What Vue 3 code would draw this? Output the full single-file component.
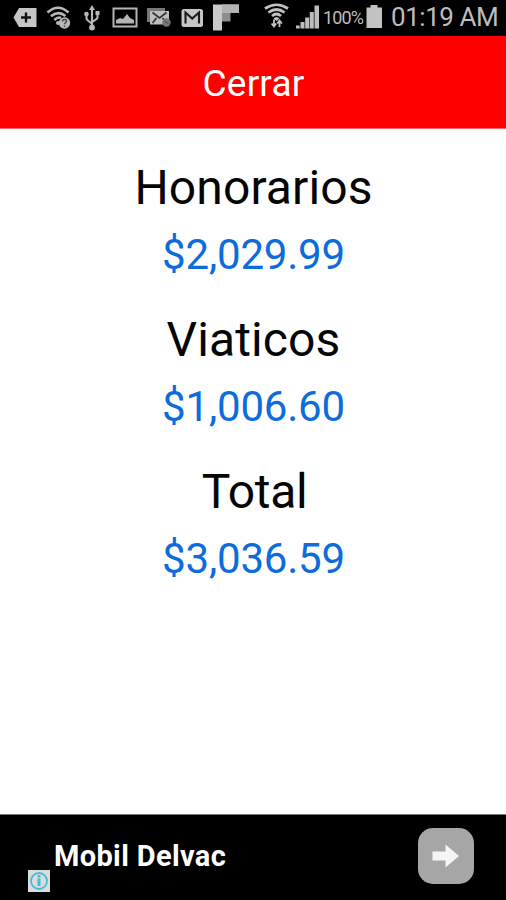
<script setup>
const items = [
    { name: 'Honorarios', key: 'honorarios', amount: '$2,029.99' },
    { name: 'Viaticos', key: 'viaticos', amount: '$1,006.60' },
    { name: 'Total', key: 'total', amount: '$3,036.59' },
]
</script>

<template>
    <div class="screen">
        <div class="status">
            <div class="notifications">
                <svg width="24" height="36" viewBox="0 0 24 36">
                    <path d="M6 8H23.500V27H6L.5 17.500Z" fill="#c6c6c6" />
                    <path d="M13 12.500v10M8 17.500h10" stroke="#111" stroke-width="2.400" />
                </svg>
                <svg class="wifi-off" width="26" height="36" viewBox="0 0 26 36">
                    <g fill="none" stroke="#b8b8b8" stroke-width="2.600">
                        <path d="M1.500 12.500Q12 3 22.500 12.500" />
                        <path d="M5 16.300Q12 10 19.500 16" />
                        <path d="M8.300 20Q12 16.500 15 18" />
                    </g>
                    <circle cx="12" cy="23" r="2" fill="#b8b8b8" />
                    <circle cx="18.500" cy="23" r="5.700" fill="#b8b8b8" />
                    <path d="M16.500 21.500q0-2 2-2t2 1.800q0 1-2 2.200v.8M18.500 25.500v1.500" fill="none" stroke="#444" stroke-width="1.300" />
                </svg>
                <svg class="usb" width="16" height="36" viewBox="0 0 16 36">
                    <g fill="none" stroke="#b8b8b8" stroke-width="2.100">
                        <path d="M8 9V28M2.500 13V18.500Q2.500 20 8 23.500M13.500 12V17.500Q13.500 19 8 22" />
                    </g>
                    <path d="M8 5l3 5H5Z" fill="#b8b8b8" />
                    <circle cx="8" cy="27.500" r="2.900" fill="#b8b8b8" />
                    <circle cx="2.500" cy="14" r="2.300" fill="#b8b8b8" />
                    <path d="M11.500 11h4v4h-4z" fill="#b8b8b8" />
                </svg>
                <svg class="picture" width="26" height="36" viewBox="0 0 26 36">
                    <path d="M1.500 8.500H24.500V26.500H1.500Z" fill="none" stroke="#b5b5b5" stroke-width="2" />
                    <path d="M4 23.500V20l4-2 3 1 4-5 3 4 4 2v3.500Z" fill="#b5b5b5" />
                </svg>
                <svg class="mail" width="26" height="36" viewBox="0 0 26 36">
                    <path d="M1 8h18v3H4.500v11H1Z" fill="#777" />
                    <path d="M4 11h19v13.500H4Z" fill="#bdbdbd" />
                    <path d="M6.500 12.500l7 5.500L20.500 12.500M6.500 23l4-5M20.500 23l-4-5" fill="none" stroke="#333" stroke-width="1.700" />
                    <circle cx="20.500" cy="22.500" r="4.200" fill="#777" />
                    <path d="M18.500 21l4 3" stroke="#444" />
                </svg>
                <svg class="gmail" width="23" height="36" viewBox="0 0 23 36">
                    <rect x=".5" y="9" width="21.500" height="18" rx="2.500" fill="#c6c6c6" />
                    <path d="M4.500 23.500V12.500L11.200 18.500L18 12.500V23.500" fill="none" stroke="#1b1b1b" stroke-width="2.100" />
                </svg>
                <svg class="flip" width="27" height="36" viewBox="0 0 27 36">
                    <path d="M0 4.500H26V13H9V30.500H0Z" fill="#c9c9c9" />
                    <path d="M9 13H17.500V21.500H9Z" fill="#8d8d8d" />
                    <path d="M9 4.500H26V13H9Z" fill="#b3b3b3" />
                </svg>
            </div>
            <svg class="wifi" width="26" height="36" viewBox="0 0 26 36">
                <g fill="none" stroke="#c2c2c2" stroke-width="2.700">
                    <path d="M1 8.500Q12.500 1 24 8.500" />
                    <path d="M4.500 12.500Q12.500 6.500 20.500 12.500" />
                    <path d="M8 16Q12.500 12 17 16" />
                </g>
                <path d="M9.500 18.500Q12.500 15.500 15.500 18.500L12.500 21Z" fill="#c2c2c2" />
                <path d="M10 19.500v6.500M15.500 27v-6M7.600 23.500l2.400 3 2.200-3M13.200 23.500l2.300-3 2.300 3" fill="none" stroke="#c2c2c2" stroke-width="1.800" />
            </svg>
            <svg class="signal" width="24" height="36" viewBox="0 0 24 36">
                <path d="M0 25.500h3.700v3H0zM4.500 22h4v6.500h-4zM9.200 17.500h4v11h-4zM13.800 12h4v16.500h-4zM18.500 5.500H23v23H18.500z" fill="#bdbdbd" />
            </svg>
            <span class="percent">100%</span>
            <svg class="battery" width="17" height="36" viewBox="0 0 17 36">
                <path d="M4.500 5h7v2.500H16V28H.5V7.500h4Z" fill="#c2c2c2" />
            </svg>
            <span class="time">01:19 AM</span>
        </div>
        <div class="close">Cerrar</div>
        <div class="content">
            <div v-for="item in items" :key="item.key" class="item">
                <div class="name" :class="item.key">{{ item.name }}</div>
                <div class="amount">{{ item.amount }}</div>
            </div>
        </div>
        <div class="ad">
            <svg class="info" width="22" height="22" viewBox="0 0 22 22">
                <rect width="22" height="22" fill="#dcdcdc" />
                <circle cx="11" cy="11" r="8" fill="none" stroke="#3fbfd8" stroke-width="1.800" />
                <path d="M11 5v2.500M11 8.500v7.500" fill="none" stroke="#3fbfd8" stroke-width="3" />
            </svg>
            <span class="brand">Mobil Delvac</span>
            <div class="go">
                <svg width="28" height="26" viewBox="0 0 28 26">
                    <path d="M.5 8.500H13.500V1.500L27 13L13.500 24.500V17.500H.5Z" fill="#f5f5f5" />
                </svg>
            </div>
        </div>
    </div>
</template>

<style>
body {
    margin: 0;
    background: #fff;
}
</style>

<style scoped>
.screen {
    width: 506px;
    height: 900px;
    display: flex;
    flex-direction: column;
    background: #fefefe;
    font-family: Roboto, sans-serif;
    overflow: hidden;
}
.screen svg {
    display: block;
    flex: none;
}
.status {
    display: flex;
    height: 36px;
    background: #000;
    color: #bdbdbd;
    line-height: 36px;
    white-space: nowrap;
}
.notifications {
    display: flex;
    width: 264px;
    padding-left: 13px;
    box-sizing: border-box;
    flex: none;
}
.wifi-off {
    margin-left: 9px;
}
.usb {
    margin-left: 12px;
}
.picture {
    margin-left: 12px;
}
.mail {
    margin-left: 8px;
}
.gmail {
    margin-left: 9px;
}
.flip {
    margin-left: 9px;
}
.signal {
    margin-left: 6px;
}
.percent {
    width: 43px;
    padding-left: 3px;
    font-size: 18px;
    letter-spacing: -0.9px;
}
.time {
    margin-left: 8px;
    font-size: 26px;
    line-height: 35px;
    letter-spacing: -0.45px;
}
.close {
    height: 92px;
    border-bottom: 1px solid #ff6a6a;
    background: #fe0000;
    color: #fff;
    font-size: 37px;
    line-height: 96px;
    letter-spacing: 0.2px;
    text-indent: 1px;
    text-align: center;
}
.content {
    flex: 1;
    padding-top: 23px;
}
.item {
    height: 152px;
    text-align: center;
}
.name {
    height: 70px;
    color: #050505;
    font-size: 48px;
    line-height: 72px;
    text-indent: 1px;
    letter-spacing: 0.1px;
}
.total {
    text-indent: 3px;
    letter-spacing: -0.3px;
}
.amount {
    height: 64px;
    color: #0d6cdb;
    font-size: 42px;
    line-height: 66px;
    text-indent: 1px;
    letter-spacing: -0.2px;
}
.ad {
    display: flex;
    align-items: center;
    height: 86px;
    padding: 0 32px 0 28px;
    box-sizing: border-box;
    border-top: 1px solid #777;
    background: #000;
}
.info {
    align-self: flex-end;
    margin-bottom: 8px;
}
.brand {
    margin-left: 4px;
    padding-bottom: 3px;
    color: #fff;
    font-size: 29px;
    font-weight: bold;
    letter-spacing: 0.35px;
}
.go {
    display: flex;
    align-items: center;
    justify-content: center;
    width: 56px;
    height: 56px;
    margin: 0 0 3px auto;
    border-radius: 15px;
    background: #a6a6a6;
}
</style>
